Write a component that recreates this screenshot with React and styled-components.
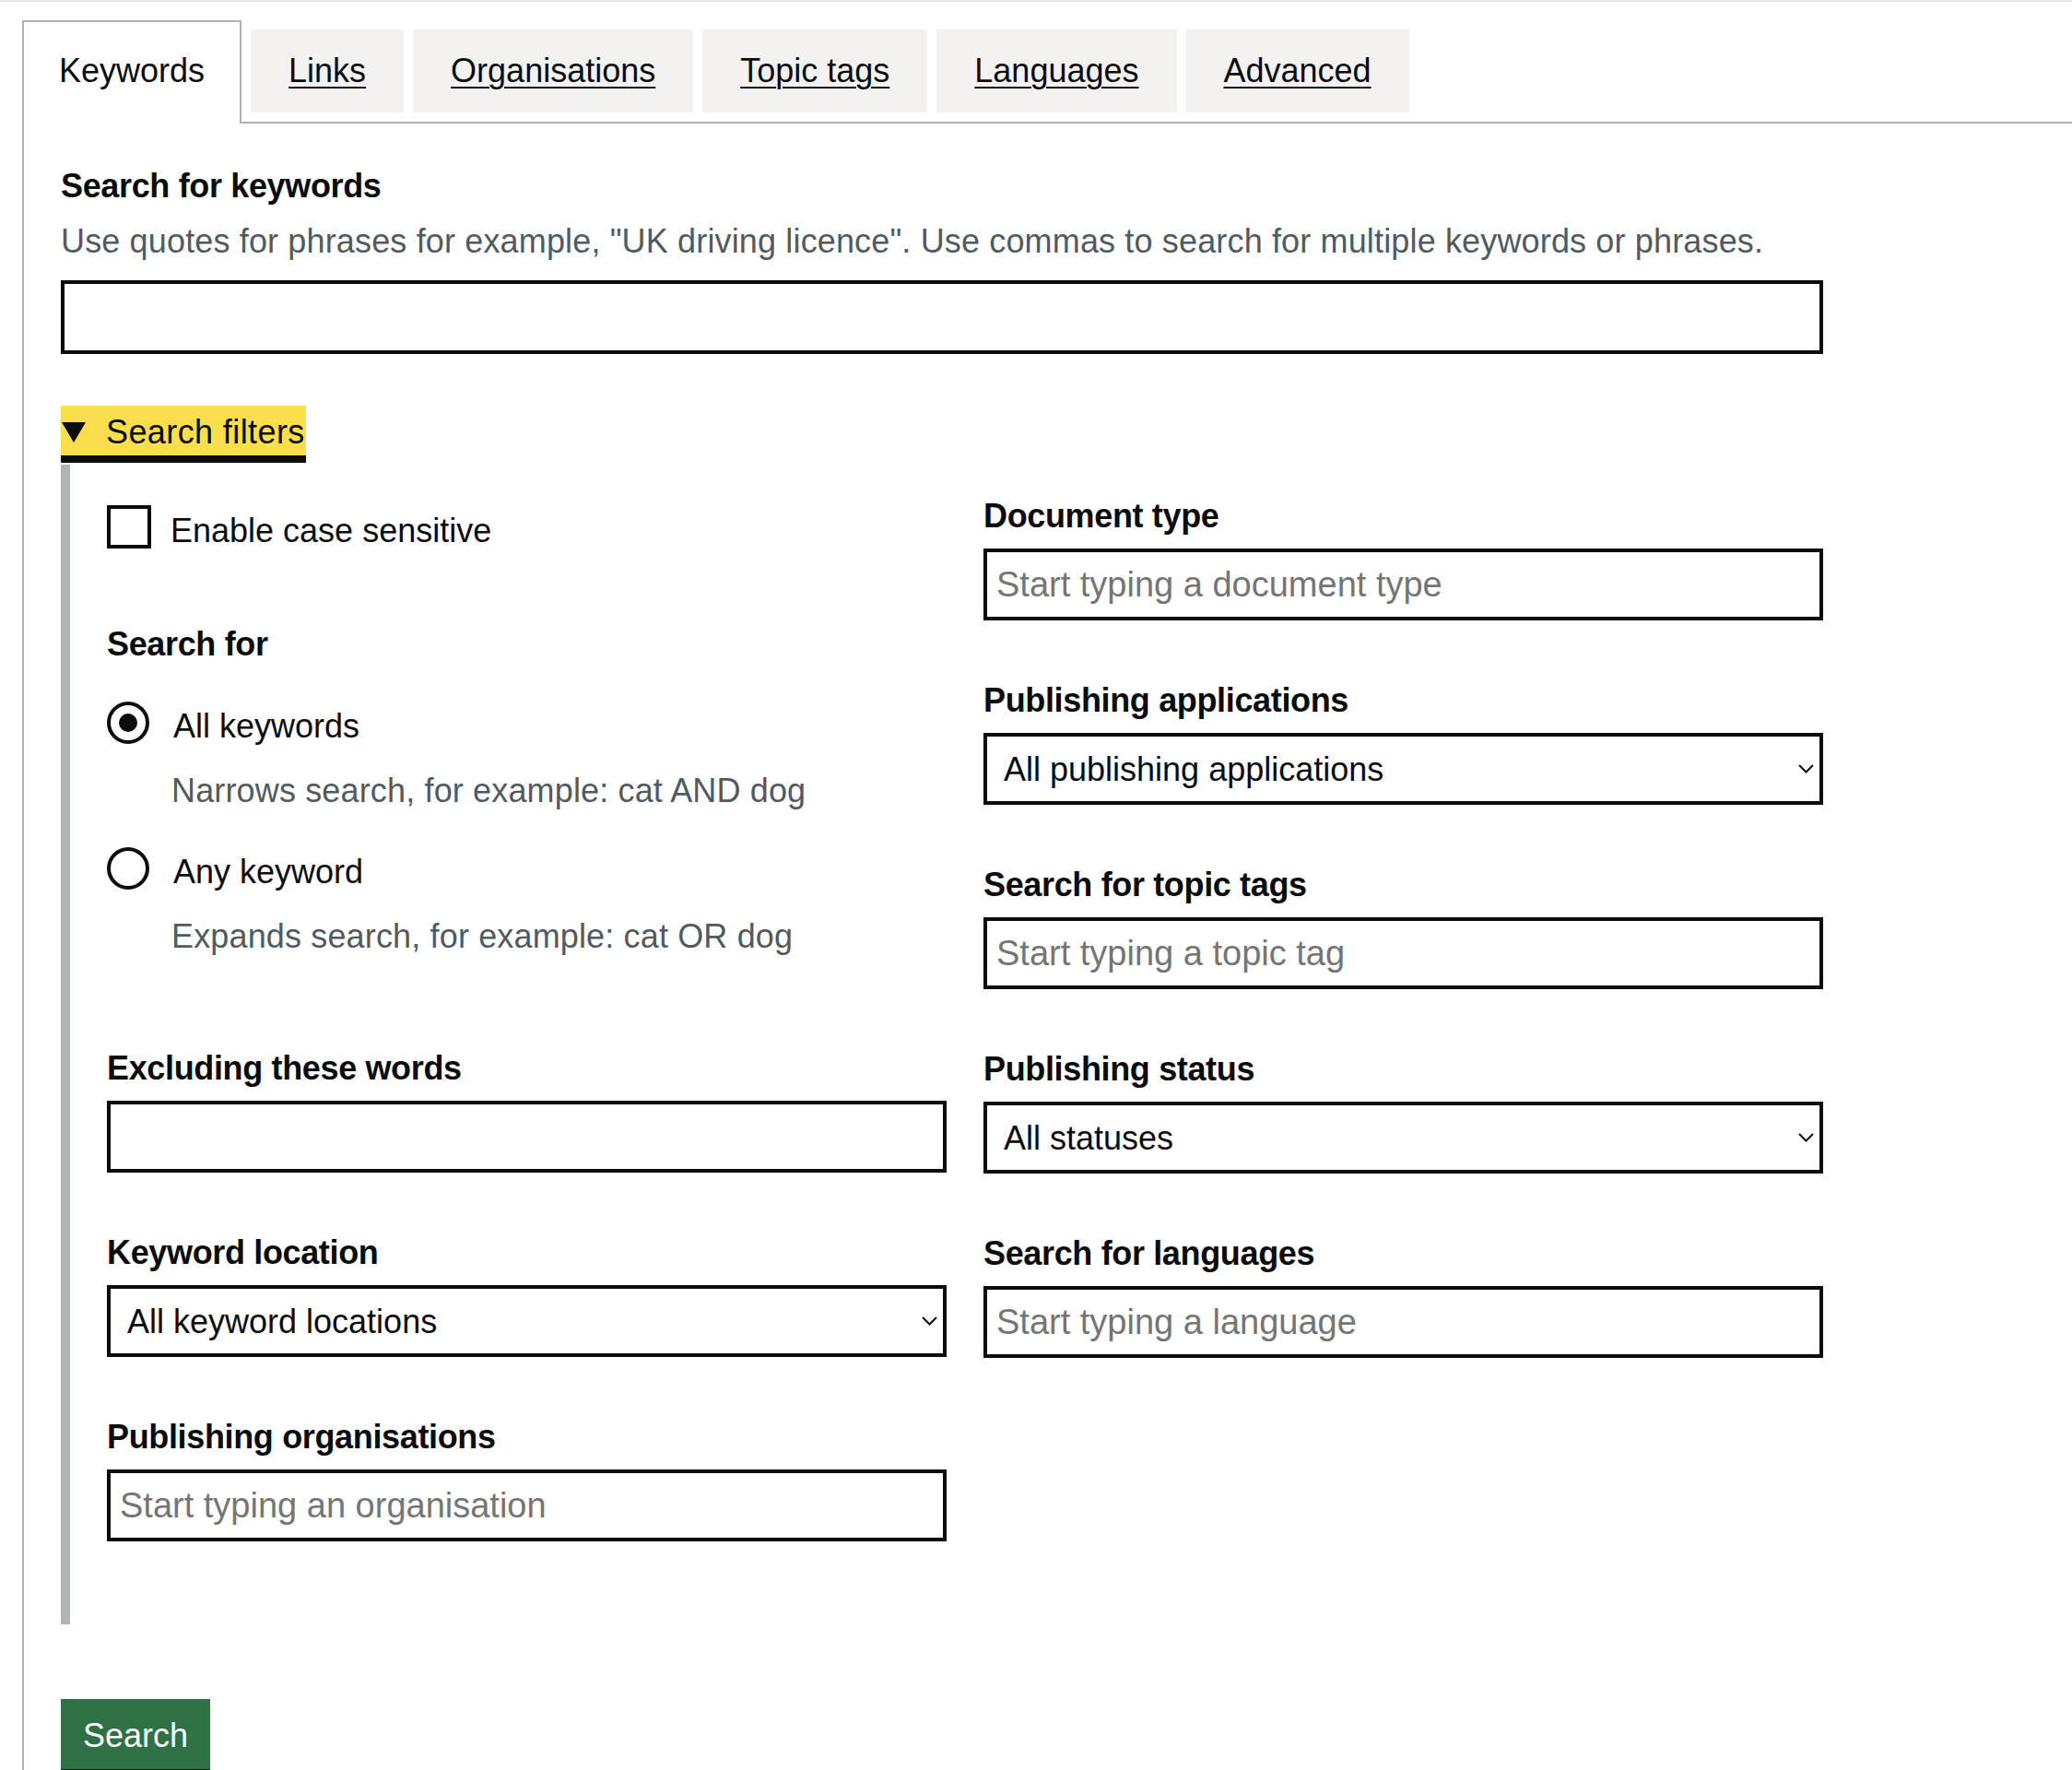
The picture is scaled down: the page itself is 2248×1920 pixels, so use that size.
import React from 'react'
import styled, { createGlobalStyle } from 'styled-components'

const GlobalStyle = createGlobalStyle`
  body {
    margin: 0;
    background: #fff;
    color: #0b0c0c;
    font-family: "Liberation Sans", Arial, sans-serif;
    font-size: 36px;
    line-height: 50px;
  }
  * { box-sizing: border-box; }
`

const TopRule = styled.div`
  height: 2px;
  background: #e5e5e5;
`

const Tabs = styled.div`
  padding: 30px 0 0 24px;
`

const TabList = styled.ul`
  display: flex;
  align-items: flex-start;
  list-style: none;
  margin: 0;
  padding: 0;
  border-bottom: 2px solid #b1b4b6;
`

const Tab = styled.li`
  margin-right: 10px;
  padding: ${p => (p.$selected ? '28px 38px 32px' : '20px 41px')};
  background: ${p => (p.$selected ? '#fff' : '#f3f2f1')};
  border: ${p => (p.$selected ? '2px solid #b1b4b6' : '0')};
  border-bottom: 0;
  margin-top: ${p => (p.$selected ? '-10px' : '0')};
  margin-bottom: ${p => (p.$selected ? '-2px' : '0')};
  white-space: nowrap;
`

const TabLink = styled.a`
  color: #0b0c0c;
  text-decoration: ${p => (p.$selected ? 'none' : 'underline')};
  text-decoration-thickness: 2px;
  text-underline-offset: 5px;
`

const Panel = styled.div`
  border-left: 2px solid #b1b4b6;
  padding: 43px 0 80px 40px;
`

const Form = styled.form`
  width: 1912px;
`

const FormGroup = styled.div`
  margin-bottom: ${p => p.$mb ?? 62}px;
`

const Label = styled.label`
  display: block;
  font-weight: 700;
  letter-spacing: -0.35px;
  margin-bottom: 10px;
`

const Hint = styled.div`
  color: #505a5f;
  letter-spacing: 0.15px;
  margin-bottom: ${p => p.$mb ?? 0}px;
  margin-top: ${p => p.$mt ?? 0}px;
  padding-left: ${p => p.$indent ?? 0}px;
`

const TextInput = styled.input`
  display: block;
  width: 100%;
  height: ${p => p.$h ?? 78}px;
  border: 4px solid #0b0c0c;
  border-radius: 0;
  padding: 0 10px;
  font-family: "Liberation Sans", Arial, sans-serif;
  font-size: 38px;
  color: #0b0c0c;
  background: #fff;
  outline: none;
  &::placeholder { color: #757575; }
`

const SelectWrap = styled.div`
  position: relative;
`

const Select = styled.select`
  display: block;
  width: 100%;
  height: 78px;
  appearance: none;
  border: 4px solid #0b0c0c;
  border-radius: 0;
  padding: 0 40px 0 18px;
  font-family: "Liberation Sans", Arial, sans-serif;
  font-size: 36px;
  color: #0b0c0c;
  background: #fff;
`

const Chevron = styled.svg`
  position: absolute;
  right: 10px;
  top: 34px;
  pointer-events: none;
`

const Details = styled.div`
  margin-bottom: 81px;
`

const Summary = styled.div`
  display: flex;
  align-items: center;
  width: fit-content;
  height: 50px;
  margin-bottom: 10px;
  padding-right: 1px;
  letter-spacing: 0.4px;
  background: #fade4b;
  box-shadow: 0 -4px 0 #fade4b, 0 8px 0 #0b0c0c;
`

const Triangle = styled.span`
  width: 0;
  height: 0;
  margin: 0 22px 0 1px;
  border-left: 13px solid transparent;
  border-right: 13px solid transparent;
  border-top: 22px solid #0b0c0c;
`

const DetailsBody = styled.div`
  display: grid;
  grid-template-columns: 1fr 1fr;
  column-gap: 40px;
  align-items: start;
  border-left: 10px solid #b1b4b6;
  padding: 31px 0 28px 40px;
`

const Column = styled.div``

const CheckRow = styled.div`
  display: flex;
  align-items: flex-start;
  gap: 21px;
  margin-top: 13px;
`

const CheckBox = styled.span`
  width: 48px;
  height: 47px;
  border: 4px solid #0b0c0c;
  background: #fff;
  flex: none;
`

const ChoiceText = styled.span`
  margin-top: ${p => p.$mt ?? 0}px;
`

const RadioGroup = styled.div`
  margin: 73px 0 93px;
`

const GroupHeading = styled.div`
  font-weight: 700;
  letter-spacing: -0.35px;
  margin-bottom: 37px;
`

const RadioRow = styled.div`
  display: flex;
  align-items: flex-start;
  gap: 26px;
  margin-top: ${p => p.$mt ?? 0}px;
`

const RadioCircle = styled.span`
  display: grid;
  place-items: center;
  flex: none;
  width: 46px;
  height: 46px;
  border: 4px solid #0b0c0c;
  border-radius: 50%;
  &::after {
    content: '';
    width: 20px;
    height: 20px;
    border-radius: 50%;
    background: ${p => (p.$checked ? '#0b0c0c' : 'transparent')};
  }
`

const Button = styled.button`
  display: block;
  padding: 18px 20px 14px;
  border: 4px solid transparent;
  border-radius: 0;
  background: #307045;
  color: #fff;
  font-family: "Liberation Sans", Arial, sans-serif;
  font-size: 36px;
  line-height: 36px;
  box-shadow: 0 4px 0 #002d18;
`

const tabs = ['Keywords', 'Links', 'Organisations', 'Topic tags', 'Languages', 'Advanced']

function TextField({ label, placeholder }) {
  return (
    <FormGroup>
      <Label>{label}</Label>
      <TextInput placeholder={placeholder} />
    </FormGroup>
  )
}

function SelectField({ label, value }) {
  return (
    <FormGroup>
      <Label>{label}</Label>
      <SelectWrap>
        <Select defaultValue={value}>
          <option>{value}</option>
        </Select>
        <Chevron width="17" height="10" viewBox="0 0 17 10">
          <polyline points="1,1 8.5,8.5 16,1" fill="none" stroke="#0b0c0c" strokeWidth="2" />
        </Chevron>
      </SelectWrap>
    </FormGroup>
  )
}

export default function App() {
  return (
    <>
      <GlobalStyle />
      <TopRule />
      <Tabs>
        <TabList>
          {tabs.map((t, i) => (
            <Tab key={t} $selected={i === 0}>
              <TabLink href="#" $selected={i === 0}>{t}</TabLink>
            </Tab>
          ))}
        </TabList>
        <Panel>
          <Form onSubmit={e => e.preventDefault()}>
            <FormGroup $mb={60}>
              <Label>Search for keywords</Label>
              <Hint $mb={17}>
                Use quotes for phrases for example, "UK driving licence". Use commas to search for multiple keywords or phrases.
              </Hint>
              <TextInput $h={80} />
            </FormGroup>

            <Details>
              <Summary>
                <Triangle />
                <span>Search filters</span>
              </Summary>
              <DetailsBody>
                <Column>
                  <CheckRow>
                    <CheckBox />
                    <ChoiceText $mt={3}>Enable case sensitive</ChoiceText>
                  </CheckRow>

                  <RadioGroup role="radiogroup">
                    <GroupHeading>Search for</GroupHeading>
                    <RadioRow>
                      <RadioCircle $checked />
                      <ChoiceText $mt={2}>All keywords</ChoiceText>
                    </RadioRow>
                    <Hint $indent={70} $mt={20}>Narrows search, for example: cat AND dog</Hint>
                    <RadioRow $mt={36}>
                      <RadioCircle />
                      <ChoiceText $mt={2}>Any keyword</ChoiceText>
                    </RadioRow>
                    <Hint $indent={70} $mt={20}>Expands search, for example: cat OR dog</Hint>
                  </RadioGroup>

                  <TextField label="Excluding these words" />
                  <SelectField label="Keyword location" value="All keyword locations" />
                  <TextField label="Publishing organisations" placeholder="Start typing an organisation" />
                </Column>

                <Column>
                  <TextField label="Document type" placeholder="Start typing a document type" />
                  <SelectField label="Publishing applications" value="All publishing applications" />
                  <TextField label="Search for topic tags" placeholder="Start typing a topic tag" />
                  <SelectField label="Publishing status" value="All statuses" />
                  <TextField label="Search for languages" placeholder="Start typing a language" />
                </Column>
              </DetailsBody>
            </Details>

            <Button type="submit">Search</Button>
          </Form>
        </Panel>
      </Tabs>
    </>
  )
}
